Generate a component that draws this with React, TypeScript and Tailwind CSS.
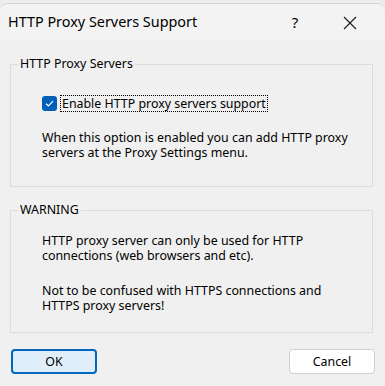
import React from 'react';

const font = "font-['Segoe_UI','Noto_Sans','Liberation_Sans',sans-serif]";

export default function App() {
  return (
    <div className={`w-[385px] h-[386px] overflow-hidden bg-[#ececec] pt-[3px] text-black ${font}`}>
      <div className="h-[383px] rounded-t-[8px] border-t border-[#d4d4d4] bg-[#f0f0f0] flex flex-col">
        {/* title bar */}
        <div className="h-[37px] rounded-t-[8px] bg-[#f3f3f3] flex items-center pl-2">
          <span className="text-[14.4px] leading-none">HTTP Proxy Servers Support</span>
          <span className="ml-auto w-[20px] text-center text-[15px] leading-none">?</span>
          <div className="w-[46px] ml-[22px] mr-[12px] flex items-center justify-center">
            <svg width="14" height="14" viewBox="0 0 14 14">
              <path d="M1 1 L13 13 M13 1 L1 13" stroke="#1a1a1a" strokeWidth="1.1" />
            </svg>
          </div>
        </div>

        {/* body */}
        <div className="flex flex-col px-[10px] pt-[15px] text-[12.4px] leading-[15px] whitespace-nowrap">
          <fieldset className="h-[131px] w-[363px] border border-[#dcdcdc] pl-[31px] pr-[4px]">
            <legend className="ml-[-24px] px-[2px] leading-[16px]">HTTP Proxy Servers</legend>
            <div className="mt-[23px] flex items-center h-[17px]">
              <div className="w-[15px] h-[15px] rounded-[3px] bg-[#005fb8] flex items-center justify-center">
                <svg width="11" height="11" viewBox="0 0 11 11">
                  <path d="M2 5.8 L4.4 8 L9 3.2" fill="none" stroke="#ffffff" strokeWidth="1.2" />
                </svg>
              </div>
              <span className="ml-[3px] border border-dotted border-black px-[1px] leading-[15px]">
                Enable HTTP proxy servers support
              </span>
            </div>
            <div className="mt-[18px]">
              <div>When this option is enabled you can add HTTP proxy</div>
              <div>servers at the Proxy Settings menu.</div>
            </div>
          </fieldset>

          <fieldset className="mt-[15px] h-[131px] w-[363px] border border-[#dcdcdc] pl-[31px] pr-[4px]">
            <legend className="ml-[-24px] px-[2px] leading-[16px]">WARNING</legend>
            <div className="mt-[15px]">
              <div>HTTP proxy server can only be used for HTTP</div>
              <div>connections (web browsers and etc).</div>
            </div>
            <div className="mt-[20px]">
              <div>Not to be confused with HTTPS connections and</div>
              <div>HTTPS proxy servers!</div>
            </div>
          </fieldset>

          <div className="mt-[16px] flex justify-between pl-[1px]">
            <button className="w-[86px] h-[25px] rounded-[4px] border-2 border-[#0067c0] bg-[#e0eef9]">
              OK
            </button>
            <button className="w-[86px] h-[25px] rounded-[4px] border border-[#d0d0d0] bg-white">
              Cancel
            </button>
          </div>
        </div>
      </div>
    </div>
  );
}
